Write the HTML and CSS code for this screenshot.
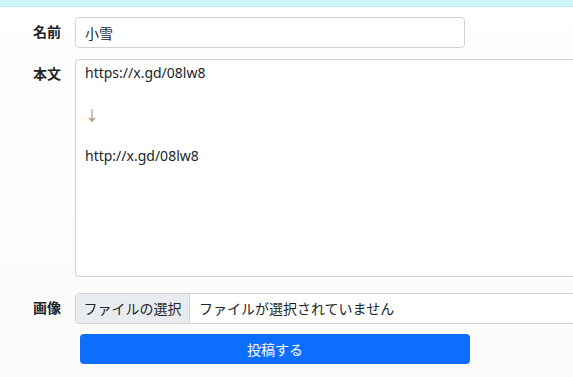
FILE: index.html
```html
<!DOCTYPE html>
<html lang="ja">
<head>
    <meta charset="UTF-8">
    <meta name="viewport" content="width=device-width, initial-scale=1.0">
    <title>投稿</title>
    <link rel="stylesheet" href="styles.css">
</head>
<body>
    <div class="bar"></div>
    <form class="form">
        <div class="row">
            <label class="label">名前</label>
            <input type="text" class="name" value="小雪">
        </div>
        <div class="row">
            <label class="label">本文</label>
            <div class="body-box">
                <div>https://x.gd/08lw8</div>
                <div>&nbsp;</div>
                <div class="arrow">↓</div>
                <div>&nbsp;</div>
                <div>http://x.gd/08lw8</div>
            </div>
        </div>
        <div class="row row-file">
            <label class="label">画像</label>
            <div class="file">
                <span class="file-btn">ファイルの選択</span>
                <span class="file-name">ファイルが選択されていません</span>
            </div>
        </div>
        <div class="row row-submit">
            <span class="label"></span>
            <button type="button" class="submit">投稿する</button>
        </div>
    </form>
</body>
</html>
```
FILE: styles.css
```css
*{
    margin: 0;
    padding: 0;
    box-sizing: border-box;
}
body{
    font-family: "Noto Sans", "Noto Sans CJK JP", sans-serif;
    font-size: 14px;
    color: #212529;
    background: linear-gradient(to bottom, #ffffff, #fafaf9);
    overflow: hidden;
    height: 377px;
}
.bar{
    height: 7px;
    background-color: #cff4fc;
    border-bottom: 1px solid #b6effb;
}
.form{
    display: flex;
    flex-direction: column;
    gap: 11px;
    padding-top: 10px;
}
.row{
    display: flex;
    align-items: flex-start;
}
.row-file{
    margin-top: 5px;
}
.row-submit{
    margin-top: -1px;
}
.label{
    width: 75px;
    padding-right: 14px;
    text-align: right;
    font-weight: bold;
    line-height: 30px;
    flex-shrink: 0;
}
.name{
    width: 390px;
    height: 31px;
    border: 1px solid #ced4da;
    border-radius: 4px;
    padding: 0 9px;
    font: inherit;
    color: #212529;
    background: #fff;
}
.body-box{
    width: 620px;
    height: 218px;
    flex-shrink: 0;
    border: 1px solid #ced4da;
    border-radius: 4px;
    padding: 3px 9px;
    background: #fff;
    line-height: 20.75px;
}
.arrow{
    color: #b8864e;
}
.file{
    display: flex;
    width: 620px;
    height: 31px;
    flex-shrink: 0;
    border: 1px solid #ced4da;
    border-radius: 4px;
    background: #fff;
    overflow: hidden;
    line-height: 29px;
}
.file-btn{
    width: 114px;
    text-align: center;
    background-color: #e9ecef;
    border-right: 1px solid #ced4da;
}
.file-name{
    padding-left: 9px;
}
.submit{
    margin-left: 5px;
    width: 390px;
    height: 30px;
    border: none;
    border-radius: 4px;
    background-color: #0d6efd;
    color: #fff;
    font: inherit;
}
```
